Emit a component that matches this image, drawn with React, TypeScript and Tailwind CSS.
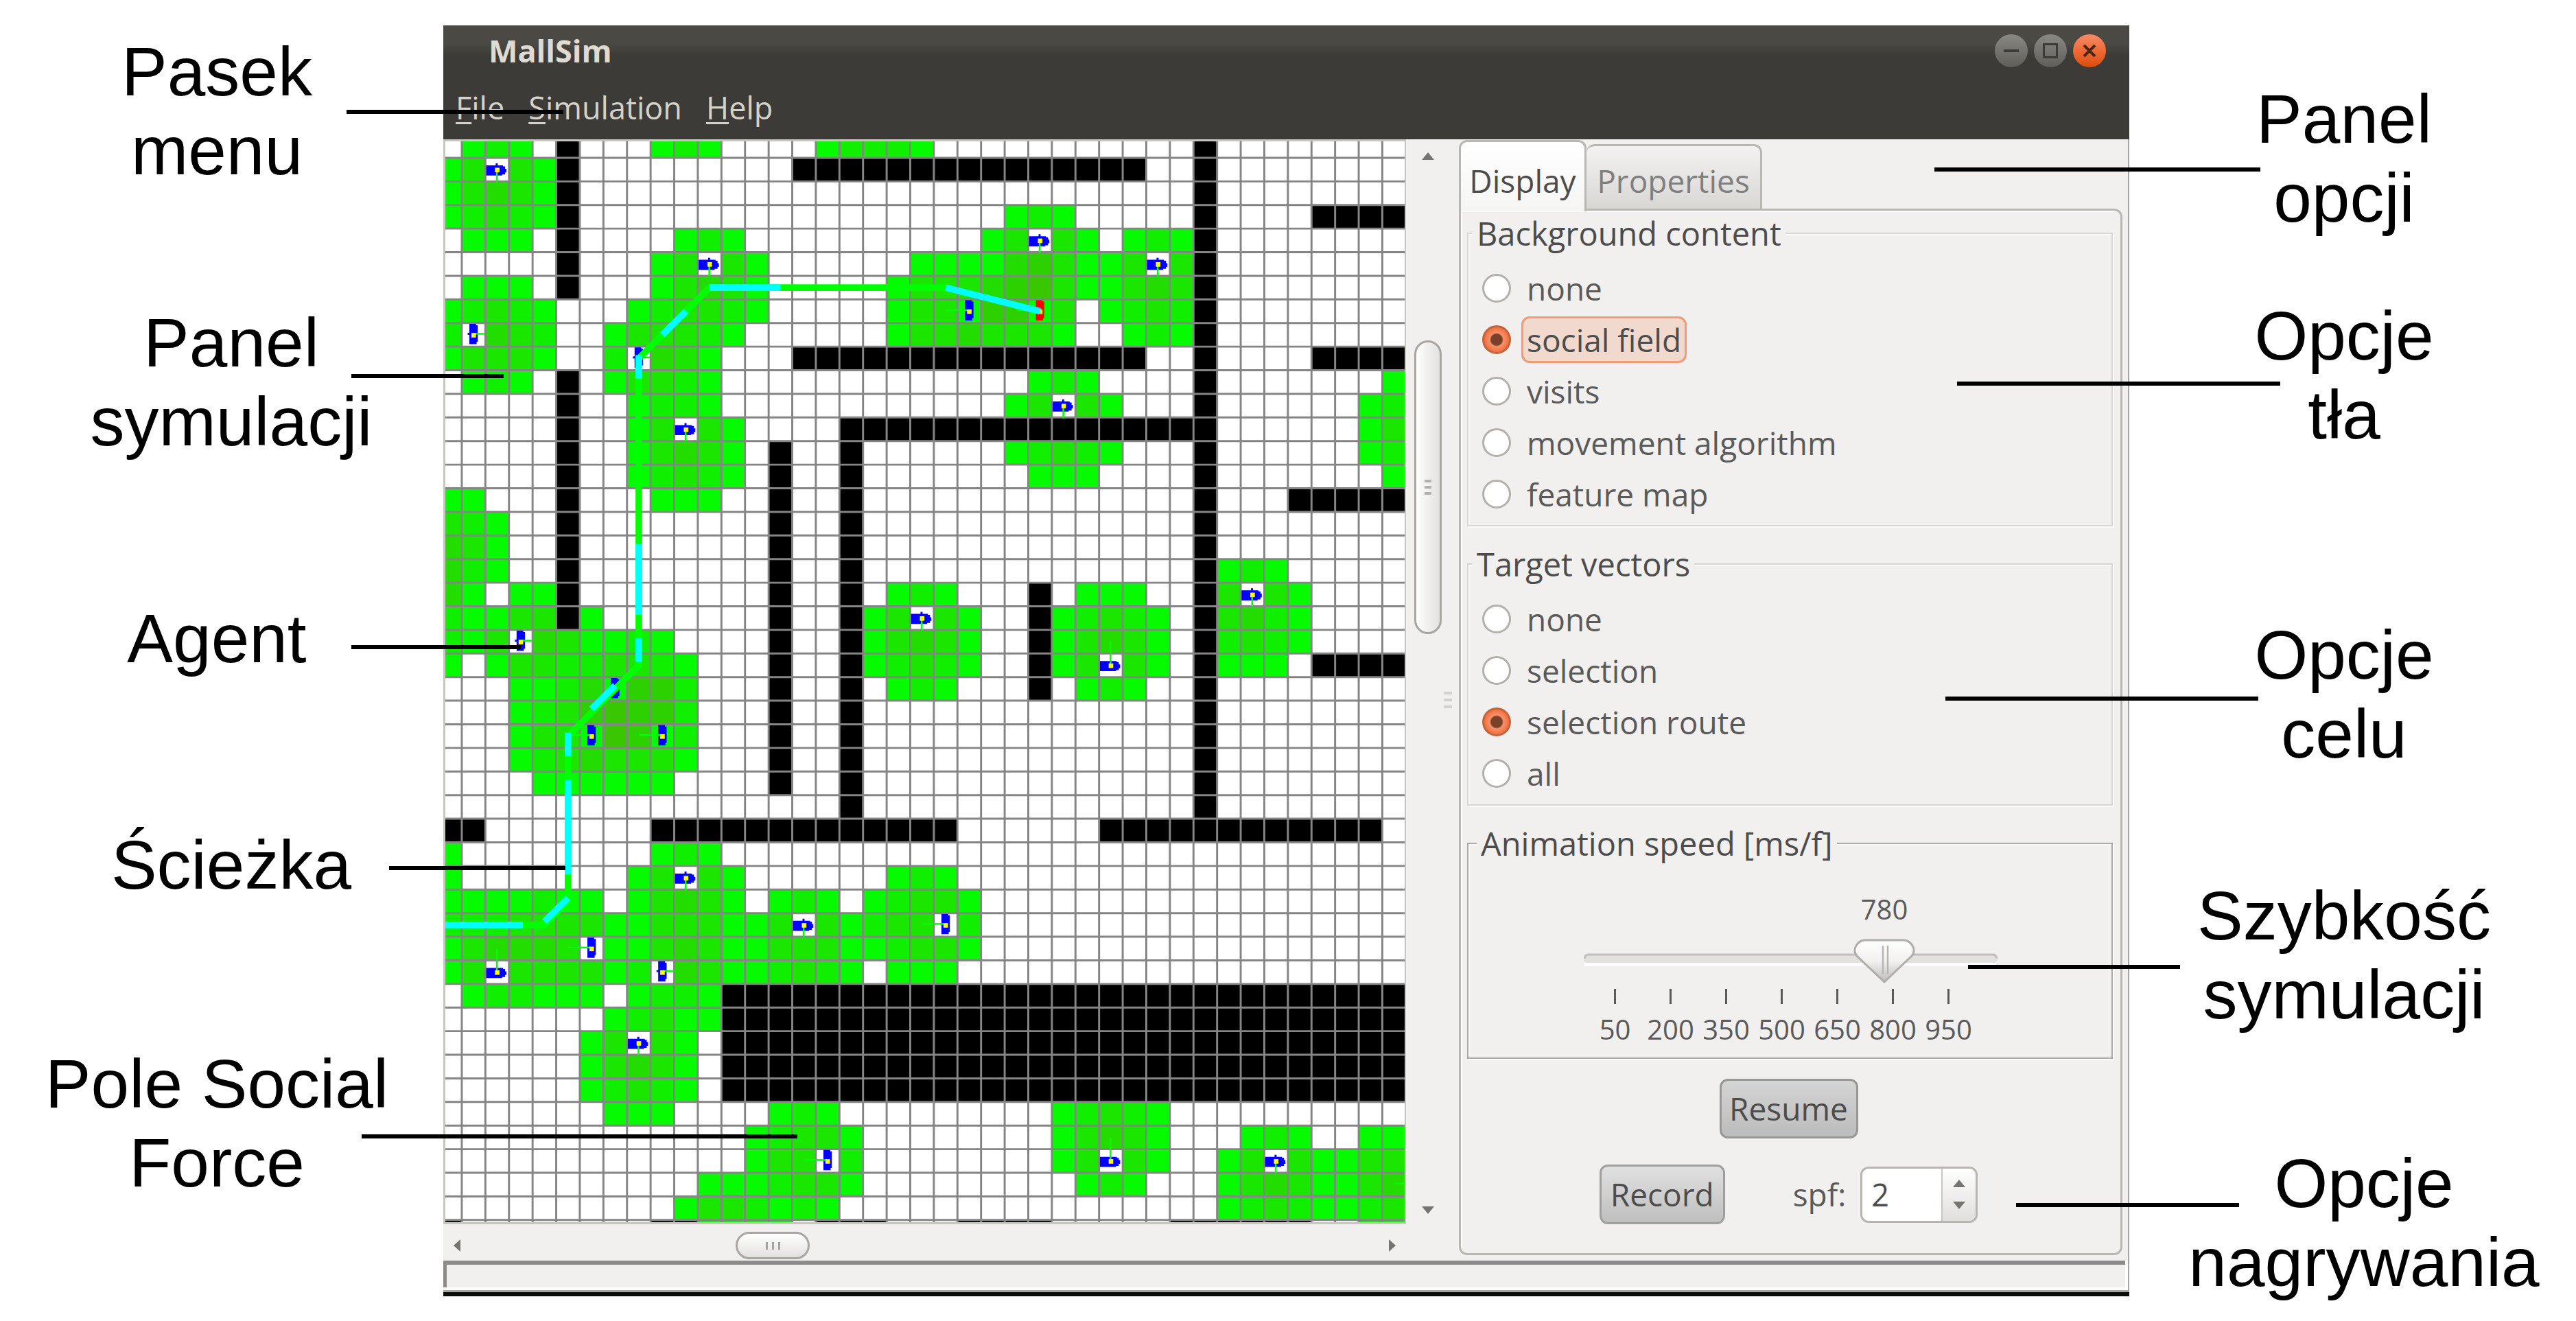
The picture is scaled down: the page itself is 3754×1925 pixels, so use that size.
import React from "react";

/* ---------- simulation map data ---------- */

const FIRST = 9.75; // position of the first grid line
const CELL = 14;
const COLS = 41;
const ROWS = 47;

const at = (i: number) => FIRST + (i - 1) * CELL;
const mid = (i: number) => at(i) + CELL / 2;

const SHADES: Record<string, string> = {
  "#": "#000000",
  "1": "#06fa00",
  "2": "#11ef00",
  "3": "#1ae600",
  "4": "#23dc00",
  "5": "#2ed100",
  "6": "#38c700",
};

// Each row lists runs of cells as "first column:cells"; "." is an empty cell.
const MAP: string[] = [
  "1:121 5:# 9:121 16:12221 32:#",
  "0:13.31 5:# 15:############### 32:#",
  "0:13431 5:# 32:#",
  "0:12321 5:# 24:121 32:# 37:####",
  "1:111 5:# 10:121 23:13.31 29:121 32:#",
  "5:# 9:13.31 20:1111453113.3#",
  "1:111 5:# 9:13431 19:1333456311343#",
  "0:12321 8:123321 19:13315513.1232#",
  "0:2.432 7:133321 19:13343331..121#",
  "0:13331 7:2.431 15:############### 32:# 37:####",
  "1:121 5:# 7:13321 25:121 32:# 40:1",
  "5:# 8:1221 24:13.31 32:# 39:12",
  "5:# 8:13.31 17:################ 39:13",
  "5:# 8:13431 14:# 17:# 24:12321 32:# 39:12",
  "5:# 8:12321 14:# 17:# 25:111 32:# 40:1",
  "0:11 5:# 9:111 14:# 17:# 32:# 36:#####",
  "0:321 5:# 14:# 17:# 32:#",
  "0:431 5:# 14:# 17:# 32:#",
  "0:421 5:# 14:# 17:# 32:# 33:121",
  "0:41.11 5:# 14:# 17:# 19:121 25:# 27:111 32:# 33:3.31",
  "0:21133 5:# 6:1 14:# 17:# 18:13.31 25:# 26:12321 32:# 33:3421",
  "0:213.431121 14:# 17:# 18:13431 25:# 26:13431 32:# 33:2321",
  "0:1.133223321 14:# 17:# 18:12321 25:# 26:13.31 32:# 33:111 37:####",
  "3:11241552 14:# 17:# 19:121 25:# 27:121 32:#",
  "3:12356552 14:# 17:# 32:#",
  "3:13316512 14:# 17:# 32:#",
  "3:12343331 14:# 17:# 32:#",
  "4:111111 14:# 17:# 32:#",
  "17:# 32:#",
  "0:## 9:############# 28:############",
  "0:1 9:121",
  "0:1 8:13.31 19:121",
  "0:1111211 8:13431 14:121 18:12331",
  "0:222333311333113.31233.2",
  "0:134443.1134311333112331",
  "0:13.333312.43112321.111",
  "1:122111 8:1221 12:#############################",
  "7:12311 12:#############################",
  "6:13.31 12:#############################",
  "6:13431 12:#############################",
  "6:12321 12:#############################",
  "7:111 14:121 26:12321",
  "13:12331 26:13431 34:121 39:11",
  "13:133.2 26:13.31 33:13.31133",
  "11:1112331 27:121 33:13431134",
  "10:1332121 33:12321123",
  "0:# 9:## 11:1111 16:### 22:#### 31:###### 39:11",
];

type Cell = { c: number; r: number; fill: string };

const CELLS: Cell[] = MAP.flatMap((line, r) =>
  line.split(" ").flatMap((run) => {
    const [start, chars] = run.split(":");
    return chars
      .split("")
      .map((ch, i) => ({ c: Number(start) + i, r, fill: SHADES[ch] }))
      .filter((cell) => cell.fill);
  }),
);

type Facing = "down" | "up" | "right" | "left";
type Agent = [number, number, Facing, string?];

const AGENTS: Agent[] = [
  [2, 1, "down"], [11, 5, "down"], [10, 12, "down"], [25, 4, "down"],
  [30, 5, "down"], [26, 11, "down"], [20, 20, "down"], [34, 19, "down"],
  [10, 31, "down"], [15, 33, "down"], [8, 38, "down"], [35, 43, "down"],
  [28, 22, "up"], [2, 35, "up"], [28, 43, "up"],
  [1, 8, "right"], [8, 9, "right"], [3, 21, "right"], [7, 23, "right"], [9, 35, "right"],
  [22, 7, "left"], [6, 25, "left"], [9, 25, "left"], [6, 34, "left"],
  [16, 43, "left"], [21, 33, "left"], [41, 44, "left"],
  [25, 7, "left", "#ff0000"],
];

function AgentMark({ agent }: { agent: Agent }) {
  const [c, r, facing, color = "#0000ff"] = agent;
  const flat = facing === "down" || facing === "up";
  return (
    <g transform={`translate(${at(c) + 0.5} ${at(r) + 0.5})`}>
      {flat ? (
        <path d="M0 4H10V4.6H11.2V6H12V8.2H11.2V9.4H9.5V10H0Z" fill={color} />
      ) : (
        <path d="M4 0H8V.8H9V10.6H8.3V12H4Z" fill={color} />
      )}
      {facing === "down" && <rect x="5.6" y="2.8" width="1.2" height="2" fill={color} />}
      {facing === "right" && <rect x="3" y="5.3" width="2" height="1.2" fill={color} />}
      {facing === "down" && <rect x="5.8" y="6" width="1" height="8" fill="#00ff00" />}
      {facing === "up" && <rect x="5.8" y="-7.4" width="1" height="13.4" fill="#00ff00" />}
      {facing === "right" && <rect x="6" y="5.4" width="7.4" height="1" fill="#00ff00" />}
      {facing === "left" && <rect x="-7.4" y="5.4" width="13" height="1" fill="#00ff00" />}
      <rect x="5.2" y="5.4" width="2.7" height="2.7" fill="#ffff00" />
    </g>
  );
}

const ROUTE = [
  [0, mid(33)], [mid(4), mid(33)], [mid(5), mid(32)], [mid(5), mid(25)],
  [mid(8), mid(22)], [mid(8), mid(9)], [mid(11), mid(6)], [mid(21), mid(6)],
];

const ROUTE_STEPS = [
  [mid(21), mid(6), mid(25), mid(7)],
  [mid(11), mid(6), mid(14), mid(6)],
  [mid(10), mid(7), mid(9), mid(8)],
  [mid(8), mid(9) - 2, mid(8), mid(10) - 2],
  [mid(8), mid(17) - 2, mid(8), mid(20) - 2],
  [mid(8), mid(21) - 2, mid(8), mid(22) - 2],
  [mid(7), mid(23) - 2, mid(6), mid(24) - 2],
  [mid(5), mid(25) - 2, mid(5), mid(26) - 2],
  [mid(5), mid(27) - 2, mid(5), mid(31) - 2],
  [mid(5), mid(32) - 2, mid(4), mid(33) - 2],
  [0, mid(33), 46, mid(33)],
];

function SimulationMap() {
  return (
    <svg viewBox="0 0 569 641" className="block w-full bg-white" role="img" aria-label="Simulation map">
      {CELLS.map(({ c, r, fill }) => (
        <rect key={`${c}-${r}`} x={at(c)} y={at(r)} width={CELL} height={CELL} fill={fill} />
      ))}
      <g stroke="#858585" strokeWidth="1.2">
        {Array.from({ length: COLS - 1 }, (_, i) => (
          <line key={i} x1={at(i + 1)} x2={at(i + 1)} y1="0" y2="641" />
        ))}
        {Array.from({ length: ROWS - 1 }, (_, i) => (
          <line key={i} y1={at(i + 1)} y2={at(i + 1)} x1="0" x2="569" />
        ))}
      </g>
      {AGENTS.map((a) => (
        <AgentMark key={`${a[0]}-${a[1]}`} agent={a} />
      ))}
      <polyline points={ROUTE.map((p) => p.join(",")).join(" ")} fill="none" stroke="#00ff00" strokeWidth="3.9" />
      <g stroke="#00ffff" strokeWidth="3.9">
        {ROUTE_STEPS.map(([x1, y1, x2, y2], i) => (
          <line key={i} x1={x1} y1={y1} x2={x2} y2={y2} />
        ))}
      </g>
    </svg>
  );
}

/* ---------- window parts ---------- */

function TitleBar() {
  return (
    <div className="flex h-[74px] items-center justify-between bg-linear-to-b from-[#4a4944] from-35% to-[#3c3b37] to-60% pr-[34px] pl-[66px]">
      <h1 className="text-[45px] font-bold text-[#dfdbd2]">MallSim</h1>
      <div className="flex gap-[9px]">
        <button aria-label="Minimize" className="size-[48px] rounded-full bg-linear-to-b from-[#8a8983] to-[#5f5e58]">
          <svg viewBox="0 0 48 48" className="size-full">
            <path d="M13 24H35" stroke="#3c3b37" strokeWidth="4" />
          </svg>
        </button>
        <button aria-label="Maximize" className="size-[48px] rounded-full bg-linear-to-b from-[#8a8983] to-[#5f5e58]">
          <svg viewBox="0 0 48 48" className="size-full">
            <rect x="14.5" y="14.5" width="19" height="19" fill="none" stroke="#3c3b37" strokeWidth="3" />
          </svg>
        </button>
        <button aria-label="Close" className="size-[48px] rounded-full bg-linear-to-b from-[#f58a66] via-[#ee6a35] to-[#dd4c00]">
          <svg viewBox="0 0 48 48" className="size-full">
            <path d="M16 16L32 32M32 16L16 32" stroke="#4a2414" strokeWidth="4" />
          </svg>
        </button>
      </div>
    </div>
  );
}

function MenuItem({ name }: { name: string }) {
  return (
    <button className="leading-[60px]">
      <span className="underline decoration-[3px] underline-offset-[4px]">{name[0]}</span>
      {name.slice(1)}
    </button>
  );
}

function MenuBar() {
  return (
    <nav className="flex h-[92px] items-center gap-[35px] bg-[#3c3b37] pl-[18px] text-[45px] text-[#d6d2c8]">
      <MenuItem name="File" />
      <MenuItem name="Simulation" />
      <MenuItem name="Help" />
    </nav>
  );
}

function Arrow({ d, label }: { d: string; label: string }) {
  return (
    <button aria-label={label} className="size-[20px]">
      <svg viewBox="0 0 20 20" className="size-full">
        <path d={d} fill="#76746f" />
      </svg>
    </button>
  );
}

function VerticalScrollbar() {
  return (
    <div className="flex w-[55px] flex-col items-center pt-[15px] pb-[64px] pl-[8px]">
      <Arrow label="Scroll up" d="M10 4L19 15H1Z" />
      <div className="flex w-full flex-1 flex-col items-center">
        <div className="grow-[259] basis-0" />
        <div className="flex w-[40px] grow-[424] basis-0 flex-col items-center justify-center gap-[5px] rounded-full border-[3px] border-[#a9a6a1] bg-linear-to-r from-white to-[#e2e1df]">
          <span className="h-[4px] w-[10px] bg-[#b3b1ad]" />
          <span className="h-[4px] w-[10px] bg-[#b3b1ad]" />
          <span className="h-[4px] w-[10px] bg-[#b3b1ad]" />
        </div>
        <div className="grow-[832] basis-0" />
      </div>
      <Arrow label="Scroll down" d="M1 5H19L10 16Z" />
    </div>
  );
}

function HorizontalScrollbar() {
  return (
    <div className="flex h-[53px] items-center px-[10px] pt-[10px]">
      <Arrow label="Scroll left" d="M5 10L15 1V19Z" />
      <div className="flex h-[40px] flex-1">
        <div className="grow-[396] basis-0" />
        <div className="flex grow-[102] basis-0 items-center justify-center gap-[6px] rounded-full border-[3px] border-[#a9a6a1] bg-linear-to-b from-white to-[#e2e1df]">
          <span className="h-[11px] w-[3px] bg-[#a5a39f]" />
          <span className="h-[11px] w-[3px] bg-[#a5a39f]" />
          <span className="h-[11px] w-[3px] bg-[#a5a39f]" />
        </div>
        <div className="grow-[839] basis-0" />
      </div>
      <Arrow label="Scroll right" d="M15 10L5 1V19Z" />
    </div>
  );
}

function Splitter() {
  return (
    <div className="flex w-[22px] flex-col justify-center gap-[6px]">
      <span className="h-[4px] w-[12px] bg-[#d2d0cc]" />
      <span className="h-[4px] w-[12px] bg-[#d2d0cc]" />
      <span className="h-[4px] w-[12px] bg-[#d2d0cc]" />
    </div>
  );
}

/* ---------- options panel ---------- */

type Choice = { label: string; checked?: boolean; focused?: boolean };

function RadioGroup({ title, name, choices }: { title: string; name: string; choices: Choice[] }) {
  return (
    <fieldset className="mb-[28px] border-2 border-[#d8d6d2] pb-[8px] pl-[20px] shadow-[2px_2px_0_#fbfbfa,inset_2px_2px_0_#fbfbfa]">
      <legend className="-ml-[14px] bg-[#f1f0ee] px-[6px] text-[47px] leading-[54px]">{title}</legend>
      <div className="pt-[15px]">
        {choices.map((choice) => {
          const id = `${name}-${choice.label.replace(" ", "-")}`;
          return (
            <div key={id} className="flex h-[75px] items-center gap-[15px]">
              <input
                type="radio"
                id={id}
                name={name}
                defaultChecked={choice.checked}
                className="size-[42px] appearance-none rounded-full border-[3px] border-[#b3b0ab] bg-white checked:border-[#c5643c] checked:bg-[radial-gradient(circle,#7a4129_0,#7a4129_8px,#f8926b_10px,#ef7443_17px)]"
              />
              <label
                htmlFor={id}
                className={
                  choice.focused
                    ? "rounded-[12px] border-[3px] border-[#f39a76] bg-[#f2d9ce] px-[5px] leading-[62px] text-[#4c4c4c]"
                    : "px-[8px] leading-[62px] text-[#5a5a5a]"
                }
              >
                {choice.label}
              </label>
            </div>
          );
        })}
      </div>
    </fieldset>
  );
}

const TICKS = [50, 200, 350, 500, 650, 800, 950];

function SpeedSlider() {
  return (
    <fieldset className="border-2 border-[#a8a8a8] pb-[16px] shadow-[2px_2px_0_#fdfdfd,inset_2px_2px_0_#fbfbfa]">
      <legend className="ml-[12px] bg-[#f1f0ee] px-[6px] text-[47px] leading-[54px]">Animation speed [ms/f]</legend>
      <div className="ml-[168px] w-[603px] pt-[39px] text-[40px] text-[#5a5a5a]">
        <output htmlFor="speed" className="ml-[394px] block w-[88px] text-center leading-[60px]">
          780
        </output>
        <div className="relative h-[86px]">
          <svg viewBox="0 0 603 86" className="size-full">
            <defs>
              <linearGradient id="knob" x1="0" y1="0" x2="0" y2="1">
                <stop offset="0" stopColor="#ffffff" />
                <stop offset=".5" stopColor="#f2f1f0" />
                <stop offset="1" stopColor="#bdbbb8" />
              </linearGradient>
            </defs>
            <rect x="1" y="48" width="600" height="5" fill="#fdfdfd" />
            <rect x="0" y="35" width="603" height="13" rx="5" fill="#e2e1de" />
            <path d="M1 42Q2 36 7 36H596Q601 36 602 42" fill="none" stroke="#c2bfba" strokeWidth="3" />
            <path
              d="M409 15H467Q476 16 480 25Q483 32 478 38L438 76L398 38Q393 32 396 25Q400 16 409 15Z"
              fill="url(#knob)"
              stroke="#b0ada9"
              strokeWidth="3"
            />
            <path d="M436 23V64M443 23V64" stroke="#b9b6b2" strokeWidth="2.5" />
          </svg>
          <input
            id="speed"
            type="range"
            aria-label="Animation speed"
            min={0}
            max={1075}
            defaultValue={780}
            className="absolute inset-0 size-full cursor-pointer opacity-0"
          />
        </div>
        <div className="ml-[5px] grid w-[567px] grid-cols-7">
          {TICKS.map((t) => (
            <div key={t} className="flex flex-col items-center gap-[12px] leading-[50px]">
              <span className="h-[22px] w-[3px] bg-[#5a5a5a]" />
              {t}
            </div>
          ))}
        </div>
      </div>
    </fieldset>
  );
}

function OptionsPanel() {
  return (
    <section className="flex w-[967px] flex-col pt-px pb-[8px] text-[46px] text-[#4c4c4c]">
      <div role="tablist" className="flex h-[100px] items-stretch">
        <button
          role="tab"
          aria-selected="true"
          className="z-10 -mb-[4px] w-[186px] rounded-t-[12px] border-[3px] border-b-0 border-[#bab7b2] bg-linear-to-b from-white to-[#f5f5f4] pt-[10px] text-center leading-[60px]"
        >
          Display
        </button>
        <button
          role="tab"
          aria-selected="false"
          className="mt-[6px] w-[256px] rounded-t-[12px] border-[3px] border-b-0 border-l-0 border-[#bab7b2] bg-linear-to-b from-[#f3f2f1] to-[#d9d7d4] pt-[8px] text-center leading-[60px] text-[#7f7f7f]"
        >
          Properties
        </button>
      </div>
      <div
        role="tabpanel"
        className="flex-1 rounded-[12px] rounded-tl-none border-[3px] border-[#bab7b2] pt-[6px] pr-[11px] pl-[9px] shadow-[inset_2px_2px_0_#fbfbfa]"
      >
        <RadioGroup
          title="Background content"
          name="background"
          choices={[
            { label: "none" },
            { label: "social field", checked: true, focused: true },
            { label: "visits" },
            { label: "movement algorithm" },
            { label: "feature map" },
          ]}
        />
        <RadioGroup
          title="Target vectors"
          name="vectors"
          choices={[
            { label: "none" },
            { label: "selection" },
            { label: "selection route", checked: true },
            { label: "all" },
          ]}
        />
        <SpeedSlider />
        <div className="mt-[29px] flex justify-center pr-[4px]">
          <button className="h-[87px] w-[202px] rounded-[12px] border-[3px] border-[#979797] bg-linear-to-b from-[#d4d4d4] to-[#bcbcbc]">
            Resume
          </button>
        </div>
        <div className="mt-[38px] flex items-center justify-center pr-[4px]">
          <button className="mr-[99px] h-[87px] w-[183px] rounded-[12px] border-[3px] border-[#9f9f9f] bg-linear-to-b from-[#e0e0e0] to-[#bfbfbf]">
            Record
          </button>
          <label htmlFor="spf" className="mr-[21px] text-[#5a5a5a]">
            spf:
          </label>
          <div className="flex h-[82px] w-[171px] overflow-hidden rounded-[12px] border-[3px] border-[#b8b5b0] bg-white">
            <input
              id="spf"
              type="text"
              defaultValue="2"
              className="w-[115px] bg-white pl-[13px] text-[45px] text-[#4c4c4c] outline-none"
            />
            <div className="flex flex-1 flex-col items-center justify-center gap-[11px] border-l-2 border-[#c9c6c2] bg-linear-to-b from-white to-[#e1dfdd]">
              <Arrow label="Increase" d="M10 4L19 15H1Z" />
              <Arrow label="Decrease" d="M1 5H19L10 16Z" />
            </div>
          </div>
        </div>
      </div>
    </section>
  );
}

function MallSimWindow() {
  return (
    <main className="font-['Open_Sans',sans-serif]">
      <TitleBar />
      <MenuBar />
      <div className="flex border-r-2 border-[#a8a6a2] bg-[#f1f0ee]">
        <div className="flex-1">
          <div className="border-y-[3px] border-r-2 border-l-[3px] border-[#c9c6c0]">
            <SimulationMap />
          </div>
          <HorizontalScrollbar />
        </div>
        <VerticalScrollbar />
        <Splitter />
        <OptionsPanel />
        <div className="w-[8px]" />
      </div>
      <div className="border-r-2 border-b-[3px] border-[#a8a6a2] bg-white">
        <div className="mr-[4px] mb-[4px] h-[39px] border-t-[6px] border-l-[5px] border-[#8d8c8a] bg-[#f1f0ee]" />
      </div>
      <div className="h-[6px] bg-[#0b0c0c]" />
    </main>
  );
}

/* ---------- callouts ---------- */

function Callout({ lines, className }: { lines: string[]; className: string }) {
  return (
    <p className={`text-center ${className}`}>
      {lines.map((l) => (
        <span key={l} className="block">
          {l}
        </span>
      ))}
    </p>
  );
}

const CONNECTORS = [
  [505, 163, 821], [512, 548, 734], [512, 943, 759], [567, 1265, 824], [527, 1656, 1162],
  [2819, 247, 3294], [2852, 559, 3323], [2835, 1018, 3291], [2868, 1409, 3177], [2938, 1756, 3263],
];

export default function App() {
  return (
    <div className="relative grid grid-cols-[646fr_2457fr_651fr] bg-white pb-[28px]">
      <aside className="pt-[47px] pr-[14px] font-['Liberation_Sans',sans-serif] text-[100px] leading-[115px] text-black">
        <Callout lines={["Pasek", "menu"]} className="" />
        <Callout lines={["Panel", "symulacji"]} className="mt-[165px] pl-[42px]" />
        <Callout lines={["Agent"]} className="mt-[201px]" />
        <Callout lines={["Ścieżka"]} className="mt-[215px] pl-[42px]" />
        <Callout lines={["Pole Social", "Force"]} className="mt-[204px]" />
      </aside>
      <div className="pt-[37px]">
        <MallSimWindow />
      </div>
      <aside className="pt-[116px] pr-[25px] font-['Liberation_Sans',sans-serif] text-[100px] leading-[115px] text-black">
        <Callout lines={["Panel", "opcji"]} className="" />
        <Callout lines={["Opcje", "tła"]} className="mt-[86px]" />
        <Callout lines={["Opcje", "celu"]} className="mt-[235px]" />
        <Callout lines={["Szybkość", "symulacji"]} className="mt-[150px]" />
        <Callout lines={["Opcje", "nagrywania"]} className="mt-[160px] pl-[58px]" />
      </aside>
      <svg
        viewBox="0 0 3754 1925"
        preserveAspectRatio="none"
        className="pointer-events-none absolute inset-0 size-full"
        aria-hidden="true"
      >
        {CONNECTORS.map(([x1, y, x2]) => (
          <path key={`${x1}-${y}`} d={`M${x1} ${y}H${x2}`} stroke="#000000" strokeWidth="6" />
        ))}
      </svg>
    </div>
  );
}
